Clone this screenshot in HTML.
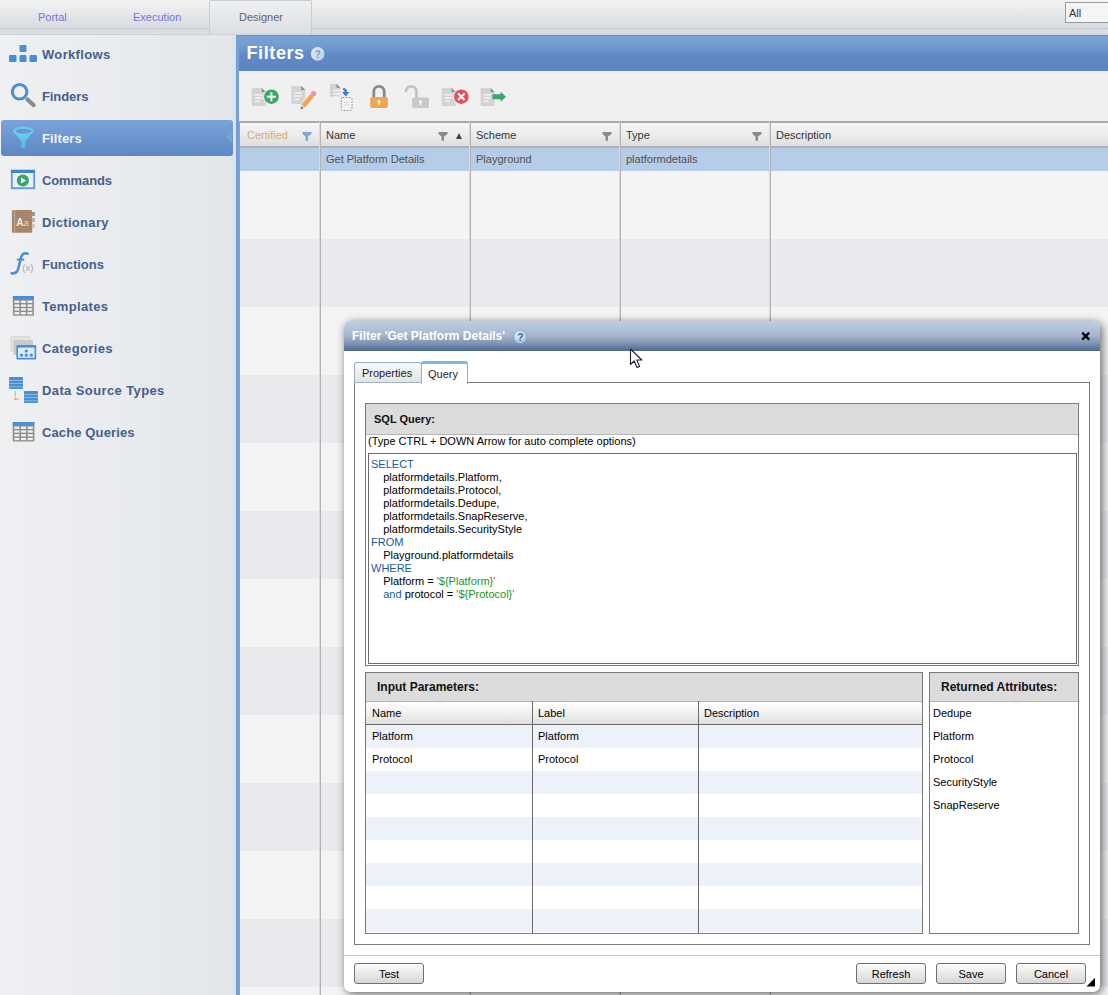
<!DOCTYPE html>
<html><head><meta charset="utf-8"><style>
*{box-sizing:border-box;margin:0;padding:0}
html,body{width:1108px;height:995px;overflow:hidden;background:#f4f4f4;font-family:"Liberation Sans",sans-serif;}
.a{position:absolute}
svg{position:absolute;overflow:visible}
.tab{font-size:11px;color:#7373f0;top:11px;white-space:nowrap}
.si{left:42px;font-size:13px;font-weight:bold;color:#43608e;white-space:nowrap;line-height:15px}
.gh{font-size:11px;color:#333;top:129px;white-space:nowrap;line-height:13px}
.vline{width:1px;background:#b3b3b3;box-shadow:-1px 0 0 #dadada}
.band{left:239px;width:869px;height:68px}
.cell{font-size:11px;color:#505050;top:153px;white-space:nowrap;line-height:13px}
.dt{font-size:12px;font-weight:bold;color:#fff;white-space:nowrap}
.box{border:1px solid #7a7a7a}
.ph{background:#dcdcdc;border-bottom:1px solid #b5b5b5}
.t11{font-size:11px;color:#000;white-space:nowrap;line-height:13px}
.pt{font-size:11px;font-weight:bold;color:#111;white-space:nowrap;line-height:13px}
.btn{height:21px;width:70px;border:1px solid #707070;border-radius:3px;background:linear-gradient(#fdfdfd,#e9e9e9 50%,#d6d6d6);font-size:11px;text-align:center;line-height:19px;padding-top:1px;color:#000}
.kw{color:#1a5aa2}.st{color:#139a13}.q{color:#d83c28}
</style></head><body>
<div class="a" style="left:0;top:0;width:1108px;height:29px;background:linear-gradient(#f4f4f4,#dfe2e5 70%,#d9dde1);border-bottom:1px solid #c2c7cd"></div>
<div class="a" style="left:0;top:29px;width:1108px;height:6px;background:#dcdfe2;border-bottom:1px solid #cad1d8"></div>
<div class="a" style="left:209px;top:0px;width:103px;height:34px;background:linear-gradient(#f0f0f0,#e3e5e8 60%,#dcdfe2);border:1px solid #c6cdd5;border-bottom:none;border-radius:2px 2px 0 0"></div>
<div class="a tab" style="left:38px">Portal</div>
<div class="a tab" style="left:133px">Execution</div>
<div class="a tab" style="left:239px;color:#666">Designer</div>
<div class="a" style="left:1065px;top:2px;width:50px;height:21px;background:#f5f5f5;border:1px solid #9a9a9a;font-size:11px;color:#333;padding:4px 0 0 3px;line-height:13px">All</div>
<div class="a" style="left:0;top:35px;width:236px;height:960px;background:linear-gradient(90deg,#eff0f2,#e3e6ea)"></div>
<div class="a" style="left:231px;top:35px;width:5px;height:960px;background:#dbe5ee"></div>
<div class="a" style="left:236px;top:35px;width:3px;height:960px;background:linear-gradient(90deg,#6f9bd1,#7ba4d8)"></div>
<div class="a" style="left:1px;top:120px;width:232px;height:36px;border-radius:3px;background:linear-gradient(#7ba3d8,#5c88c5)"></div>
<svg width="8" height="14" style="left:225px;top:130px" viewBox="225 130 8 14"><path d="M225.6 137 L232.2 130.8 L232.2 143.2 Z" fill="#78a1d5"/></svg>
<div class="a si" style="top:47px;letter-spacing:0.33px">Workflows</div>
<div class="a si" style="top:89px;letter-spacing:-0.09px">Finders</div>
<div class="a si" style="top:131px;letter-spacing:0.11px;color:#eef3fa">Filters</div>
<div class="a si" style="top:173px;letter-spacing:-0.11px">Commands</div>
<div class="a si" style="top:215px;letter-spacing:0.33px">Dictionary</div>
<div class="a si" style="top:257px;letter-spacing:-0.02px">Functions</div>
<div class="a si" style="top:299px;letter-spacing:0.33px">Templates</div>
<div class="a si" style="top:341px;letter-spacing:0.37px">Categories</div>
<div class="a si" style="top:383px;letter-spacing:0.39px">Data Source Types</div>
<div class="a si" style="top:425px;letter-spacing:0.12px">Cache Queries</div>
<svg width="40" height="30" style="left:0;top:38px" viewBox="0 38 40 30">
<rect x="19.5" y="45" width="7" height="7" rx="1" fill="#4a8fd6"/>
<rect x="9" y="55" width="7.5" height="7" rx="1" fill="#4a8fd6"/>
<rect x="19.5" y="55" width="7" height="7" rx="1" fill="#4a8fd6"/>
<rect x="29.5" y="55" width="7.5" height="7" rx="1" fill="#4a8fd6"/>
</svg>
<svg width="40" height="30" style="left:0;top:80px" viewBox="0 80 40 30">
<circle cx="19.6" cy="91.8" r="7.3" fill="none" stroke="#4a8fd6" stroke-width="3"/>
<line x1="27.5" y1="99.5" x2="33.5" y2="105" stroke="#8a8a8a" stroke-width="4.2" stroke-linecap="round"/>
</svg>
<svg width="40" height="30" style="left:0;top:122px" viewBox="0 122 40 30">
<defs><linearGradient id="fg" x1="0" y1="0" x2="0" y2="1"><stop offset="0" stop-color="#66d0f2"/><stop offset="1" stop-color="#56b8f0"/></linearGradient></defs>
<path d="M13.2 131.1 L21.3 141.5 L21.3 148 L25.2 148 L25.2 141.5 L33.5 131.1 Z" fill="url(#fg)"/>
<ellipse cx="23.4" cy="131.1" rx="9.2" ry="3.4" fill="#6a97cf" stroke="#62cdf1" stroke-width="2.2"/>
</svg>
<svg width="40" height="30" style="left:0;top:165px" viewBox="0 165 40 30">
<rect x="11.8" y="170.8" width="22.4" height="17.4" fill="none" stroke="#5b9be0" stroke-width="1.8"/>
<rect x="11" y="169.8" width="24" height="3.2" fill="#3f86cf"/>
<circle cx="22.9" cy="180.5" r="6.1" fill="#3ba66a"/>
<path d="M21 177.4 L26 180.5 L21 183.6 Z" fill="#f4f4f4"/>
</svg>
<svg width="40" height="30" style="left:0;top:206px" viewBox="0 206 40 30">
<rect x="32" y="212" width="3" height="4" fill="#9a9a9a"/>
<rect x="32" y="218" width="3" height="4" fill="#b9b9b9"/>
<rect x="32" y="224" width="3" height="4" fill="#d0d0d0"/>
<rect x="11.9" y="209.9" width="20.3" height="22.9" rx="1.5" fill="#a6866a"/>
<rect x="14.2" y="210" width="1" height="22.8" fill="#c4a88e"/>
<text x="16.2" y="225.5" font-family="Liberation Sans" font-size="10" font-weight="bold" fill="#f3ece4">A</text>
<text x="23.4" y="225.5" font-family="Liberation Sans" font-size="9" font-style="italic" fill="#e6dacd">a</text>
</svg>
<svg width="40" height="30" style="left:0;top:248px" viewBox="0 248 40 30">
<path d="M27.8 253.6 C24 252.2 21.6 254.5 20.6 259 L18.3 268.5 C17.3 272.6 15 273.8 11.6 273.2" fill="none" stroke="#4a8fd6" stroke-width="2.6" stroke-linecap="round"/>
<path d="M16.8 259.6 L24.2 259.6" stroke="#4a8fd6" stroke-width="2"/>
<text x="22.3" y="270.6" font-family="Liberation Sans" font-size="9.5" fill="#a8a8a8">(x)</text>
</svg>
<svg width="40" height="30" style="left:0;top:290px" viewBox="0 290 40 30"><rect x="12.9" y="296" width="21" height="19.8" rx="1" fill="#8e8e8e"/><rect x="12.9" y="296" width="21" height="3.2" fill="#4a8fd6"/><rect x="14.50" y="300.60" width="4.87" height="2.40" fill="#f0f0f0"/><rect x="20.97" y="300.60" width="4.87" height="2.40" fill="#f0f0f0"/><rect x="27.43" y="300.60" width="4.87" height="2.40" fill="#f0f0f0"/><rect x="14.50" y="304.40" width="4.87" height="2.40" fill="#f0f0f0"/><rect x="20.97" y="304.40" width="4.87" height="2.40" fill="#f0f0f0"/><rect x="27.43" y="304.40" width="4.87" height="2.40" fill="#f0f0f0"/><rect x="14.50" y="308.20" width="4.87" height="2.40" fill="#f0f0f0"/><rect x="20.97" y="308.20" width="4.87" height="2.40" fill="#f0f0f0"/><rect x="27.43" y="308.20" width="4.87" height="2.40" fill="#f0f0f0"/><rect x="14.50" y="312.00" width="4.87" height="2.40" fill="#f0f0f0"/><rect x="20.97" y="312.00" width="4.87" height="2.40" fill="#f0f0f0"/><rect x="27.43" y="312.00" width="4.87" height="2.40" fill="#f0f0f0"/></svg>
<svg width="40" height="30" style="left:0;top:333px" viewBox="0 333 40 30">
<rect x="11" y="336.6" width="19" height="15" rx="1" fill="#e3e3e3" stroke="#d0d0d0" stroke-width="0.8"/>
<rect x="13.5" y="340" width="19.5" height="15" rx="1" fill="#c9c9c9"/>
<rect x="16.4" y="345" width="19.8" height="14.5" rx="1" fill="#4a8fd6"/>
<rect x="18" y="347.6" width="16.6" height="10.2" fill="#dfe9f5"/>
<circle cx="26.3" cy="351" r="1.6" fill="#4a8fd6"/>
<circle cx="21.5" cy="355.2" r="1.6" fill="#4a8fd6"/>
<circle cx="26.3" cy="355.2" r="1.6" fill="#4a8fd6"/>
<circle cx="31.3" cy="355.2" r="1.6" fill="#4a8fd6"/>
</svg>
<svg width="40" height="36" style="left:0;top:374px" viewBox="0 374 40 36">
<rect x="9" y="377" width="14" height="12" rx="1" fill="#4a8fd6"/>
<rect x="9" y="380" width="14" height="0.8" fill="#9cc2ea"/>
<rect x="9" y="383.2" width="14" height="0.8" fill="#9cc2ea"/>
<rect x="9" y="386.4" width="14" height="0.8" fill="#9cc2ea"/>
<rect x="24" y="391" width="14" height="12" rx="1" fill="#4a8fd6"/>
<rect x="24" y="394" width="14" height="0.8" fill="#9cc2ea"/>
<rect x="24" y="397.2" width="14" height="0.8" fill="#9cc2ea"/>
<rect x="24" y="400.4" width="14" height="0.8" fill="#9cc2ea"/>
<rect x="14.8" y="391" width="1" height="6" fill="#b0b0b0"/>
<circle cx="15.4" cy="399" r="1.3" fill="#f0b030"/>
<rect x="17" y="398.6" width="2" height="0.8" fill="#999"/>
</svg>
<svg width="40" height="30" style="left:0;top:416px" viewBox="0 416 40 30"><rect x="12.7" y="422" width="21.7" height="19.6" rx="1" fill="#8e8e8e"/><rect x="12.7" y="422" width="21.7" height="3.2" fill="#4a8fd6"/><rect x="14.30" y="426.60" width="5.10" height="2.35" fill="#f0f0f0"/><rect x="21.00" y="426.60" width="5.10" height="2.35" fill="#f0f0f0"/><rect x="27.70" y="426.60" width="5.10" height="2.35" fill="#f0f0f0"/><rect x="14.30" y="430.35" width="5.10" height="2.35" fill="#f0f0f0"/><rect x="21.00" y="430.35" width="5.10" height="2.35" fill="#f0f0f0"/><rect x="27.70" y="430.35" width="5.10" height="2.35" fill="#f0f0f0"/><rect x="14.30" y="434.10" width="5.10" height="2.35" fill="#f0f0f0"/><rect x="21.00" y="434.10" width="5.10" height="2.35" fill="#f0f0f0"/><rect x="27.70" y="434.10" width="5.10" height="2.35" fill="#f0f0f0"/><rect x="14.30" y="437.85" width="5.10" height="2.35" fill="#f0f0f0"/><rect x="21.00" y="437.85" width="5.10" height="2.35" fill="#f0f0f0"/><rect x="27.70" y="437.85" width="5.10" height="2.35" fill="#f0f0f0"/></svg>
<div class="a" style="left:239px;top:35px;width:869px;height:36px;background:linear-gradient(#6690cc 0px,#7aa3d7 2px,#729cd2 10px,#5f8ac5 20px,#5b86c2 36px)"></div>
<div class="a" style="left:246.5px;top:42px;font-size:18px;font-weight:bold;color:#fff;line-height:22px;letter-spacing:0.6px">Filters</div>
<svg width="16" height="16" style="left:310px;top:46px" viewBox="310 46 16 16">
<defs><linearGradient id="qg" x1="0" y1="0" x2="1" y2="1"><stop offset="0" stop-color="#e4eef8"/><stop offset="1" stop-color="#b8cfe6"/></linearGradient></defs>
<circle cx="317.7" cy="53.9" r="6.8" fill="url(#qg)"/>
<text x="317.7" y="57.8" text-anchor="middle" font-family="Liberation Sans" font-size="10" font-weight="bold" fill="#8b9bb0">?</text>
</svg>
<div class="a" style="left:239px;top:71px;width:869px;height:51px;background:#f0f0f0"></div>
<svg width="300" height="51" style="left:239px;top:71px" viewBox="239 71 300 51"><path d="M252.8 88 L261.8 88 L265.8 92 L265.8 105 Q265.8 106 264.8 106 L252.8 106 Q251.8 106 251.8 105 L251.8 89 Q251.8 88 252.8 88 Z" fill="#d3d3d3"/><path d="M261.8 88 L265.8 92 L261.8 92 Z" fill="#8c8c8c"/><rect x="254.8" y="94" width="7.5" height="1.6" fill="#f2f2f2"/><rect x="254.8" y="97.2" width="7.5" height="1.6" fill="#f2f2f2"/><rect x="254.8" y="100.5" width="5" height="1.6" fill="#f2f2f2"/><circle cx="271.4" cy="96.7" r="8.3" fill="#f0f0f0"/><circle cx="271.4" cy="96.7" r="7.3" fill="#3aa76a"/><rect x="266.9" y="95.7" width="9" height="2" fill="#fff"/><rect x="270.4" y="92.2" width="2" height="9" fill="#fff"/><path d="M292.3 86 L301.3 86 L305.3 90 L305.3 103 Q305.3 104 304.3 104 L292.3 104 Q291.3 104 291.3 103 L291.3 87 Q291.3 86 292.3 86 Z" fill="#d3d3d3"/><path d="M301.3 86 L305.3 90 L301.3 90 Z" fill="#8c8c8c"/><rect x="294.3" y="92" width="7.5" height="1.6" fill="#f2f2f2"/><rect x="294.3" y="95.2" width="7.5" height="1.6" fill="#f2f2f2"/><rect x="294.3" y="98.5" width="5" height="1.6" fill="#f2f2f2"/><line x1="304" y1="105.5" x2="312" y2="96" stroke="#f0f0f0" stroke-width="7"/><line x1="303.2" y1="106" x2="312.2" y2="95.4" stroke="#efa64e" stroke-width="4.6"/><circle cx="313.6" cy="93.6" r="2.6" fill="#f28ab8"/><path d="M300.6 109.2 L301.5 106 L303.8 107.9 Z" fill="#666"/><path d="M331 83.8 L336.5 83.8 L340.5 87.8 L340.5 95.8 Q340.5 96.8 339.5 96.8 L331 96.8 Q330 96.8 330 95.8 L330 84.8 Q330 83.8 331 83.8 Z" fill="#d3d3d3"/><path d="M336.5 83.8 L340.5 87.8 L336.5 87.8 Z" fill="#8c8c8c"/><rect x="333" y="89.8" width="7.5" height="1.6" fill="#f2f2f2"/><rect x="333" y="93.0" width="7.5" height="1.6" fill="#f2f2f2"/><rect x="333" y="96.3" width="5" height="1.6" fill="#f2f2f2"/><path d="M343 88 Q347 88 347 92 L349.5 92 L345.8 96.5 L342 92 L344.5 92 Q344.5 90 343 90 Z" fill="#3a7fcb"/><rect x="341.3" y="97.5" width="10.7" height="13" rx="1.5" fill="#f3f3f3" stroke="#8a8a8a" stroke-width="1" stroke-dasharray="1.6 1.4"/><rect x="344" y="102" width="5" height="1" fill="#d8d8d8"/><rect x="344" y="104.5" width="5" height="1" fill="#d8d8d8"/><path d="M373.8 97.5 L373.8 91.5 A5.2 5.2 0 0 1 384.2 91.5 L384.2 97.5" fill="none" stroke="#8a8a8a" stroke-width="2.8"/><rect x="370.2" y="97" width="17.7" height="11.1" rx="2" fill="#efa64e"/><circle cx="379" cy="101.2" r="1.3" fill="#fff"/><rect x="378.3" y="101.2" width="1.4" height="3.8" fill="#fff"/><path d="M406 92 L406 91.5 A5.2 5.2 0 0 1 416.4 91.5 L416.4 98" fill="none" stroke="#c4c4c4" stroke-width="2.8"/><rect x="412" y="97.5" width="17" height="10.6" rx="2" fill="#c9c9c9"/><circle cx="420.5" cy="101.5" r="1.3" fill="#fff"/><rect x="419.8" y="101.5" width="1.4" height="3.8" fill="#fff"/><path d="M442.7 88 L451.7 88 L455.7 92 L455.7 105 Q455.7 106 454.7 106 L442.7 106 Q441.7 106 441.7 105 L441.7 89 Q441.7 88 442.7 88 Z" fill="#d3d3d3"/><path d="M451.7 88 L455.7 92 L451.7 92 Z" fill="#8c8c8c"/><rect x="444.7" y="94" width="7.5" height="1.6" fill="#f2f2f2"/><rect x="444.7" y="97.2" width="7.5" height="1.6" fill="#f2f2f2"/><rect x="444.7" y="100.5" width="5" height="1.6" fill="#f2f2f2"/><circle cx="461.3" cy="96.7" r="8.2" fill="#f0f0f0"/><circle cx="461.3" cy="96.7" r="7.3" fill="#e6505b"/><path d="M458 93.4 L464.6 100 M464.6 93.4 L458 100" stroke="#fff" stroke-width="2"/><path d="M481.6 88 L490.6 88 L494.6 92 L494.6 105 Q494.6 106 493.6 106 L481.6 106 Q480.6 106 480.6 105 L480.6 89 Q480.6 88 481.6 88 Z" fill="#d3d3d3"/><path d="M490.6 88 L494.6 92 L490.6 92 Z" fill="#8c8c8c"/><rect x="483.6" y="94" width="7.5" height="1.6" fill="#f2f2f2"/><rect x="483.6" y="97.2" width="7.5" height="1.6" fill="#f2f2f2"/><rect x="483.6" y="100.5" width="5" height="1.6" fill="#f2f2f2"/><path d="M492.4 94.2 L500.5 94.2 L500.5 91.7 L506 96.8 L500.5 101.8 L500.5 99.3 L492.4 99.3 Z" fill="#3aa76a"/></svg>
<div class="a" style="left:239px;top:121px;width:869px;height:27px;background:linear-gradient(#f6f6f6,#ececec 50%,#dedede);border-top:2px solid #a6aaad;border-bottom:2px solid #adb1b4"></div>
<div class="a" style="left:239px;top:148px;width:869px;height:23px;background:#b7cce9"></div>
<div class="a band" style="top:171px;background:#f4f4f4"></div>
<div class="a band" style="top:239px;background:#e8eaee"></div>
<div class="a band" style="top:307px;background:#f4f4f4"></div>
<div class="a band" style="top:375px;background:#e8eaee"></div>
<div class="a band" style="top:443px;background:#f4f4f4"></div>
<div class="a band" style="top:511px;background:#e8eaee"></div>
<div class="a band" style="top:579px;background:#f4f4f4"></div>
<div class="a band" style="top:647px;background:#e8eaee"></div>
<div class="a band" style="top:715px;background:#f4f4f4"></div>
<div class="a band" style="top:783px;background:#e8eaee"></div>
<div class="a band" style="top:851px;background:#f4f4f4"></div>
<div class="a band" style="top:919px;background:#e8eaee"></div>
<div class="a band" style="top:987px;background:#f4f4f4"></div>
<div class="a vline" style="left:320px;top:122px;height:873px"></div>
<div class="a vline" style="left:470px;top:122px;height:873px"></div>
<div class="a vline" style="left:620px;top:122px;height:873px"></div>
<div class="a vline" style="left:770px;top:122px;height:873px"></div>
<div class="a" style="left:239px;top:121px;width:1px;height:874px;background:#93a0ad"></div>
<div class="a gh" style="left:247px;color:#d5ae74">Certified</div>
<div class="a gh" style="left:326px">Name</div>
<div class="a gh" style="left:476px">Scheme</div>
<div class="a gh" style="left:626px">Type</div>
<div class="a gh" style="left:776px">Description</div>
<svg width="10" height="10" style="left:302px;top:131px" viewBox="0 0 10 10"><path d="M0.5 1 L9.5 1 L9.5 3 L6 5.5 L6 9.8 L3.5 9.8 L3.5 5.5 L0.5 3 Z" fill="#7ea7db"/></svg>
<svg width="10" height="10" style="left:438px;top:131px" viewBox="0 0 10 10"><path d="M0.5 1 L9.5 1 L9.5 3 L6 5.5 L6 9.8 L3.5 9.8 L3.5 5.5 L0.5 3 Z" fill="#8a8a8a"/></svg>
<svg width="10" height="10" style="left:602px;top:131px" viewBox="0 0 10 10"><path d="M0.5 1 L9.5 1 L9.5 3 L6 5.5 L6 9.8 L3.5 9.8 L3.5 5.5 L0.5 3 Z" fill="#8a8a8a"/></svg>
<svg width="10" height="10" style="left:752px;top:131px" viewBox="0 0 10 10"><path d="M0.5 1 L9.5 1 L9.5 3 L6 5.5 L6 9.8 L3.5 9.8 L3.5 5.5 L0.5 3 Z" fill="#8a8a8a"/></svg>
<svg width="8" height="8" style="left:455px;top:132px" viewBox="0 0 8 8"><path d="M1 7 L4 1 L7 7 Z" fill="#444"/></svg>
<div class="a cell" style="left:326px">Get Platform Details</div>
<div class="a cell" style="left:476px">Playground</div>
<div class="a cell" style="left:626px">platformdetails</div>
<div class="a" style="left:344px;top:321px;width:756px;height:671px;background:#fff;border-radius:7px;box-shadow:2px 2px 10px rgba(0,0,0,.6)"></div>
<div class="a" style="left:344px;top:321px;width:756px;height:30px;border-radius:7px 7px 0 0;background:linear-gradient(#bdcfe6 0%,#a9b9cf 45%,#7e93b3 75%,#4b6894 100%)"></div>
<div class="a dt" style="left:352px;top:329px">Filter 'Get Platform Details'</div>
<svg width="16" height="16" style="left:512px;top:329px" viewBox="512 329 16 16"><defs><radialGradient id="dq" cx="0.4" cy="0.35" r="0.7"><stop offset="0" stop-color="#e6f0fa"/><stop offset="1" stop-color="#9cc0e4"/></radialGradient></defs><circle cx="520.2" cy="336.8" r="6.6" fill="url(#dq)" stroke="#7d9cc0" stroke-width="0.6"/><text x="520.2" y="340.6" text-anchor="middle" font-family="Liberation Sans" font-size="10" font-weight="bold" fill="#3f5f88">?</text></svg>
<svg width="12" height="12" style="left:1079px;top:330px" viewBox="1079 330 12 12"><path d="M1082.2 332.6 L1089.2 339.6 M1089.2 332.6 L1082.2 339.6" stroke="#000" stroke-width="2.3"/></svg>
<svg width="16" height="22" style="left:629px;top:348px" viewBox="0 0 16 22"><path d="M1.5 1 L1.5 16.5 L5.2 13 L8 19.5 L10.6 18.4 L7.9 12 L12.8 12 Z" fill="#fff" stroke="#1a2030" stroke-width="1.1" stroke-linejoin="round"/></svg>
<svg width="10" height="10" style="left:1086px;top:977px" viewBox="0 0 10 10"><path d="M9 0.8 L9 9.5 L0.5 9.5 Z" fill="#000"/></svg>
<div class="a" style="left:354px;top:362px;width:68px;height:21px;background:linear-gradient(#f9f9f9,#e0e3e6);border:1px solid #9cadc0;border-bottom:none;border-radius:3px 3px 0 0"></div>
<div class="a t11" style="left:362px;top:367px;color:#222">Properties</div>
<div class="a" style="left:421px;top:361px;width:47px;height:23px;background:#fff;border:1px solid #9cadc0;border-bottom:none;border-radius:3px 3px 0 0"></div>
<div class="a" style="left:422px;top:362px;width:45px;height:2px;background:#72bbed"></div>
<div class="a t11" style="left:428px;top:368px;color:#222">Query</div>
<div class="a box" style="left:354px;top:382px;width:736px;height:563px;border-top-color:#777"></div>
<div class="a" style="left:422px;top:382px;width:45px;height:2px;background:#fff"></div>
<div class="a" style="left:354px;top:382px;width:68px;height:1px;background:#9fb2c6"></div>
<div class="a box" style="left:365px;top:403px;width:714px;height:263px"></div>
<div class="a ph" style="left:366px;top:404px;width:712px;height:31px"></div>
<div class="a pt" style="left:374px;top:413px">SQL Query:</div>
<div class="a t11" style="left:368px;top:435px">(Type CTRL + DOWN Arrow for auto complete options)</div>
<div class="a box" style="left:368px;top:453px;width:709px;height:211px;border-color:#6e6e6e"></div>
<div class="a t11" style="left:371px;top:458px;white-space:pre;color:#000"><span class="kw">SELECT</span>
    platformdetails.Platform,
    platformdetails.Protocol,
    platformdetails.Dedupe,
    platformdetails.SnapReserve,
    platformdetails.SecurityStyle
<span class="kw">FROM</span>
    Playground.platformdetails
<span class="kw">WHERE</span>
    Platform = <span class="q">'</span><span class="st">${Platform}</span><span class="q">'</span>
    <span class="kw">and</span> protocol = <span class="q">'</span><span class="st">${Protocol}</span><span class="q">'</span></div>
<div class="a box" style="left:365px;top:672px;width:558px;height:262px"></div>
<div class="a ph" style="left:366px;top:673px;width:556px;height:29px"></div>
<div class="a pt" style="left:377px;top:681px;font-size:12px">Input Parameters:</div>
<div class="a" style="left:366px;top:702px;width:556px;height:23px;background:linear-gradient(#ffffff,#f4f4f4 40%,#dedede);border-bottom:1px solid #6a6a6a"></div>
<div class="a" style="left:366px;top:725px;width:556px;height:23px;background:#edf2fa"></div>
<div class="a" style="left:366px;top:748px;width:556px;height:23px;background:#ffffff"></div>
<div class="a" style="left:366px;top:771px;width:556px;height:23px;background:#edf2fa"></div>
<div class="a" style="left:366px;top:794px;width:556px;height:23px;background:#ffffff"></div>
<div class="a" style="left:366px;top:817px;width:556px;height:23px;background:#edf2fa"></div>
<div class="a" style="left:366px;top:840px;width:556px;height:23px;background:#ffffff"></div>
<div class="a" style="left:366px;top:863px;width:556px;height:23px;background:#edf2fa"></div>
<div class="a" style="left:366px;top:886px;width:556px;height:23px;background:#ffffff"></div>
<div class="a" style="left:366px;top:909px;width:556px;height:23px;background:#edf2fa"></div>
<div class="a" style="left:532px;top:701px;width:1px;height:232px;background:#6a6a6a"></div>
<div class="a" style="left:698px;top:701px;width:1px;height:232px;background:#6a6a6a"></div>
<div class="a t11" style="left:372px;top:707px">Name</div>
<div class="a t11" style="left:538px;top:707px">Label</div>
<div class="a t11" style="left:704px;top:707px">Description</div>
<div class="a t11" style="left:372px;top:730px">Platform</div>
<div class="a t11" style="left:538px;top:730px">Platform</div>
<div class="a t11" style="left:372px;top:753px">Protocol</div>
<div class="a t11" style="left:538px;top:753px">Protocol</div>
<div class="a box" style="left:929px;top:672px;width:150px;height:262px"></div>
<div class="a ph" style="left:930px;top:673px;width:148px;height:29px"></div>
<div class="a pt" style="left:941px;top:681px;font-size:12px">Returned Attributes:</div>
<div class="a t11" style="left:933px;top:707px">Dedupe</div>
<div class="a t11" style="left:933px;top:730px">Platform</div>
<div class="a t11" style="left:933px;top:753px">Protocol</div>
<div class="a t11" style="left:933px;top:776px">SecurityStyle</div>
<div class="a t11" style="left:933px;top:799px">SnapReserve</div>
<div class="a" style="left:344px;top:955px;width:756px;height:1px;background:#c8c8c8"></div>
<div class="a btn" style="left:354px;top:963px">Test</div>
<div class="a btn" style="left:856px;top:963px">Refresh</div>
<div class="a btn" style="left:936px;top:963px">Save</div>
<div class="a btn" style="left:1016px;top:963px">Cancel</div>
</body></html>
